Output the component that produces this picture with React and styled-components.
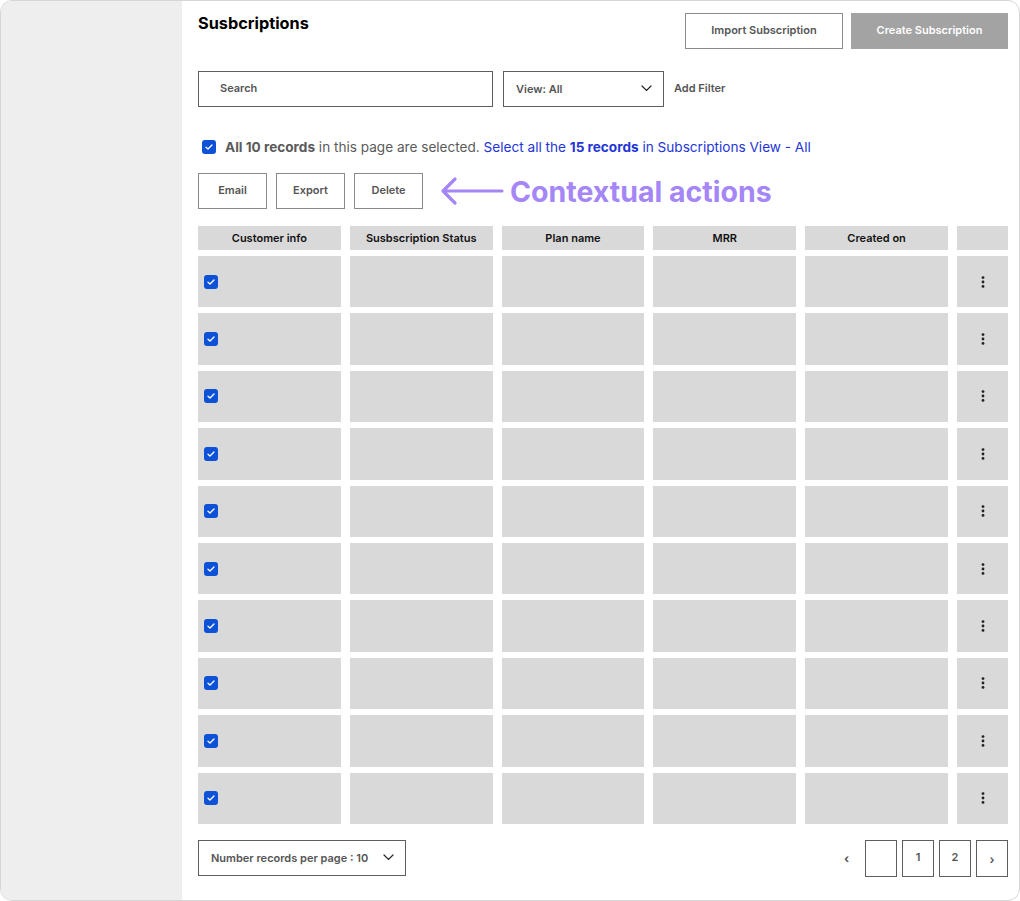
import styled, { createGlobalStyle } from "styled-components";

const GlobalStyle = createGlobalStyle`
  body {
    margin: 0;
    font-family: Inter, "Liberation Sans", sans-serif;
    background: #fff;
  }
  * { box-sizing: border-box; }
`;

const columns = ["Customer info", "Susbscription Status", "Plan name", "MRR", "Created on", ""];
const rows = Array.from({ length: 10 }, (_, i) => i);

const Check = ({ size = 14 }) => (
  <CheckBox size={size}>
    <svg width="8" height="6" viewBox="0 0 8 6" fill="none">
      <path d="M1 3.2 L3 5 L7 1" stroke="#fff" strokeWidth="1.3" strokeLinecap="round" strokeLinejoin="round" />
    </svg>
  </CheckBox>
);

const Chevron = () => (
  <svg width="11" height="7" viewBox="0 0 11 7" fill="none">
    <path d="M1 1 L5.5 5.5 L10 1" stroke="#222" strokeWidth="1.2" strokeLinecap="round" />
  </svg>
);

const Kebab = () => (
  <svg width="4" height="12" viewBox="0 0 4 12">
    <circle cx="2" cy="1.6" r="1.4" fill="#222" />
    <circle cx="2" cy="6" r="1.4" fill="#222" />
    <circle cx="2" cy="10.4" r="1.4" fill="#222" />
  </svg>
);

const App = () => {
  return (
    <>
      <GlobalStyle />
      <Frame>
        <Sidebar />
        <Main>
          <Header>
            <Title>Susbcriptions</Title>
            <HeaderActions>
              <Button width={158}>Import Subscription</Button>
              <Button width={157} primary>Create Subscription</Button>
            </HeaderActions>
          </Header>

          <Filters>
            <Field width={295}>Search</Field>
            <Select width={161}>
              View: All
              <Chevron />
            </Select>
            <FilterLink>Add Filter</FilterLink>
          </Filters>

          <Selection>
            <Check />
            <span>
              <strong>All 10 records</strong> in this page are selected.{" "}
              <Link>
                Select all the <strong>15 records</strong> in Subscriptions View - All
              </Link>
            </span>
          </Selection>

          <Actions>
            <Button width={69}>Email</Button>
            <Button width={69}>Export</Button>
            <Button width={69}>Delete</Button>
            <Note>
              <svg width="64" height="30" viewBox="0 0 64 30" fill="none">
                <path d="M62 15 H3 M15 3 L3 15 L15 27" stroke="#a586f7" strokeWidth="3.2" strokeLinecap="round" strokeLinejoin="round" />
              </svg>
              <NoteText>Contextual actions</NoteText>
            </Note>
          </Actions>

          <Table>
            {columns.map((c, i) => (
              <HeadCell key={i}>{c}</HeadCell>
            ))}
            {rows.map((r) =>
              columns.map((c, i) => (
                <Cell key={`${r}-${i}`} align={i === 0 ? "start" : "center"}>
                  {i === 0 && <Check />}
                  {i === columns.length - 1 && <Kebab />}
                </Cell>
              ))
            )}
          </Table>

          <Footer>
            <Select width={208}>
              Number records per page : 10
              <Chevron />
            </Select>
            <Pager>
              <PageArrow>‹</PageArrow>
              <PageBox />
              <PageBox>1</PageBox>
              <PageBox>2</PageBox>
              <PageBox small>›</PageBox>
            </Pager>
          </Footer>
        </Main>
      </Frame>
    </>
  );
};

const Frame = styled.div`
  width: 1020px;
  height: 901px;
  display: flex;
  border: 1px solid #d6d6d6;
  border-radius: 12px;
  overflow: hidden;
`;

const Sidebar = styled.aside`
  width: 181px;
  flex-shrink: 0;
  background: #eeeeee;
`;

const Main = styled.main`
  flex: 1;
  padding: 12px 11px 0 16px;
  display: flex;
  flex-direction: column;
`;

const Header = styled.div`
  display: flex;
  justify-content: space-between;
  height: 36px;
`;

const Title = styled.h1`
  margin: 0;
  font-size: 16.3px;
  font-weight: 700;
  line-height: 20px;
  color: #000;
`;

const HeaderActions = styled.div`
  display: flex;
  gap: 8px;
`;

const Button = styled.button`
  width: ${({ width }) => width}px;
  height: 36px;
  padding: 0 0 2px;
  font-family: inherit;
  font-size: 11px;
  font-weight: 600;
  color: ${({ primary }) => (primary ? "#fff" : "#555")};
  background: ${({ primary }) => (primary ? "#a3a3a3" : "#fff")};
  border: 1px solid ${({ primary }) => (primary ? "#a3a3a3" : "#8a8a8a")};
  border-radius: 0;
`;

const Filters = styled.div`
  display: flex;
  align-items: center;
  gap: 10px;
  margin-top: 22px;
  height: 36px;
`;

const Field = styled.div`
  width: ${({ width }) => width}px;
  height: 36px;
  display: flex;
  align-items: center;
  padding: 0 0 2px 21px;
  border: 1px solid #5e5e5e;
  font-size: 11px;
  font-weight: 600;
  color: #555;
`;

const Select = styled(Field)`
  justify-content: space-between;
  padding: 0 11px 1px 12px;
`;

const FilterLink = styled.span`
  font-size: 11px;
  font-weight: 600;
  color: #555;
  margin-bottom: 2px;
`;

const Selection = styled.div`
  display: flex;
  align-items: center;
  gap: 9px;
  margin-top: 31px;
  padding-left: 4px;
  height: 18px;
  font-size: 13.6px;
  line-height: 18px;
  color: #5a5a5a;

  strong {
    font-weight: 700;
  }
`;

const Link = styled.span`
  color: #2335d8;
`;

const CheckBox = styled.span`
  width: ${({ size }) => size}px;
  height: ${({ size }) => size}px;
  flex-shrink: 0;
  display: inline-flex;
  align-items: center;
  justify-content: center;
  border-radius: 3px;
  background: #0d52d6;
`;

const Actions = styled.div`
  display: flex;
  align-items: center;
  gap: 9px;
  margin-top: 17px;
  height: 36px;
`;

const Note = styled.div`
  display: flex;
  align-items: center;
  gap: 6px;
  margin-left: 8px;
`;

const NoteText = styled.span`
  font-size: 28.5px;
  font-weight: 700;
  color: #a586f7;
`;

const Table = styled.div`
  display: grid;
  grid-template-columns: repeat(5, 1fr) 51px;
  grid-template-rows: 24px;
  grid-auto-rows: 51.4px;
  column-gap: 9px;
  row-gap: 6px;
  margin-top: 17px;
`;

const HeadCell = styled.div`
  background: #d9d9d9;
  display: flex;
  align-items: center;
  justify-content: center;
  font-size: 11px;
  font-weight: 600;
  color: #111;
`;

const Cell = styled.div`
  background: #d9d9d9;
  display: flex;
  align-items: center;
  justify-content: ${({ align }) => (align === "start" ? "flex-start" : "center")};
  padding-left: ${({ align }) => (align === "start" ? "6px" : "0")};
`;

const Footer = styled.div`
  display: flex;
  justify-content: space-between;
  align-items: center;
  margin-top: 16px;
  height: 37px;
`;

const Pager = styled.div`
  display: flex;
  align-items: center;
  gap: 5px;
`;

const PageArrow = styled.span`
  width: 14px;
  margin-right: 2px;
  font-size: 12px;
  font-weight: 700;
  color: #555;
`;

const PageBox = styled.div`
  width: 32px;
  height: 37px;
  display: flex;
  align-items: center;
  justify-content: center;
  border: 1px solid #5e5e5e;
  font-size: ${({ small }) => (small ? "12px" : "11px")};
  font-weight: 600;
  color: #555;
  padding: ${({ small }) => (small ? "3px 0 0" : "0 0 2px")};
`;

export default App;
